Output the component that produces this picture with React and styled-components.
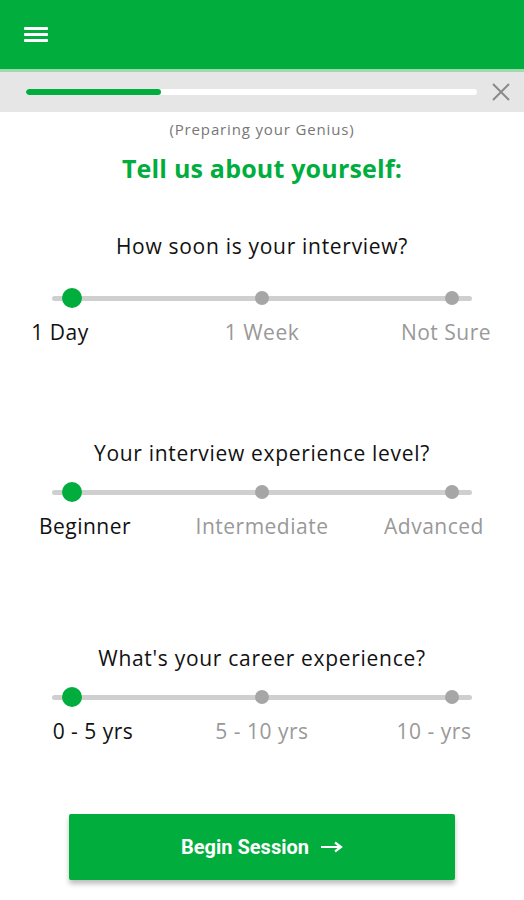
import React, { useState } from "react";
import styled, { createGlobalStyle } from "styled-components";

const GREEN = "#00ad3d";

const questions = [
  {
    id: "soon",
    title: "How soon is your interview?",
    top: 48,
    gap: 27,
    options: [
      { label: "1 Day", shift: -12 },
      { label: "1 Week", shift: 0 },
      { label: "Not Sure", shift: -6 },
    ],
  },
  {
    id: "level",
    title: "Your interview experience level?",
    top: 93,
    gap: 14,
    options: [
      { label: "Beginner", shift: 13 },
      { label: "Intermediate", shift: 0 },
      { label: "Advanced", shift: -18 },
    ],
  },
  {
    id: "career",
    title: "What's your career experience?",
    top: 104,
    gap: 14,
    options: [
      { label: "0 - 5 yrs", shift: 21 },
      { label: "5 - 10 yrs", shift: 0 },
      { label: "10 - yrs", shift: -18 },
    ],
  },
];

const App = () => {
  const [answers, setAnswers] = useState({ soon: 0, level: 0, career: 0 });

  return (
    <Page>
      <GlobalStyle />
      <Header>
        <MenuButton aria-label="menu">
          <span />
          <span />
          <span />
        </MenuButton>
      </Header>
      <ProgressStrip>
        <Track>
          <Fill style={{ width: "30%" }} />
        </Track>
        <Close aria-label="close">
          <svg width="20" height="20" viewBox="0 0 20 20">
            <path d="M2 2 L18 18 M18 2 L2 18" stroke="#8a8a8a" strokeWidth="2" fill="none" />
          </svg>
        </Close>
      </ProgressStrip>
      <Subtitle>(Preparing your Genius)</Subtitle>
      <Title>Tell us about yourself:</Title>
      {questions.map((q) => (
        <Question key={q.id} $top={q.top}>
          <QuestionTitle>{q.title}</QuestionTitle>
          <Slider $gap={q.gap}>
            <Line />
            {q.options.map((o, i) => (
              <DotCell key={o.label} onClick={() => setAnswers({ ...answers, [q.id]: i })}>
                <Dot $active={answers[q.id] === i} />
              </DotCell>
            ))}
          </Slider>
          <Labels>
            {q.options.map((o, i) => (
              <Label key={o.label} $active={answers[q.id] === i} $shift={o.shift}>
                {o.label}
              </Label>
            ))}
          </Labels>
        </Question>
      ))}
      <Footer>
        <BeginButton>
          Begin Session
          <svg width="22" height="12" viewBox="0 0 22 12">
            <path d="M0 6 H19 M14 1.5 L20 6 L14 10.5" stroke="#fff" strokeWidth="2.2" fill="none" />
          </svg>
        </BeginButton>
      </Footer>
    </Page>
  );
};

export default App;

const GlobalStyle = createGlobalStyle`
  body {
    margin: 0;
    background: #fff;
    font-family: "Open Sans", Lato, sans-serif;
  }
`;

const Page = styled.div`
  width: 524px;
  height: 900px;
  overflow: hidden;
  display: flex;
  flex-direction: column;
`;

const Header = styled.div`
  height: 69px;
  background: ${GREEN};
  border-bottom: 3px solid #9fd9b0;
  display: flex;
  align-items: center;
  padding-left: 24px;
`;

const MenuButton = styled.div`
  width: 24px;
  display: flex;
  flex-direction: column;
  gap: 3px;
  span {
    height: 3px;
    background: #fff;
    border-radius: 1px;
  }
`;

const ProgressStrip = styled.div`
  height: 40px;
  background: #e6e6e6;
  display: flex;
  align-items: center;
  padding: 0 13px 0 26px;
  gap: 14px;
`;

const Track = styled.div`
  flex: 1;
  height: 6px;
  background: #fff;
  border-radius: 3px;
  overflow: hidden;
`;

const Fill = styled.div`
  height: 100%;
  background: ${GREEN};
  border-radius: 3px;
`;

const Close = styled.div`
  width: 20px;
  height: 20px;
  display: flex;
`;

const Subtitle = styled.div`
  margin-top: 7px;
  line-height: 20px;
  text-align: center;
  font-size: 15px;
  letter-spacing: 0.85px;
  color: #777;
`;

const Title = styled.h1`
  margin: 13px 0 0;
  line-height: 32px;
  text-align: center;
  font-size: 25px;
  font-weight: 700;
  letter-spacing: 0.2px;
  color: ${GREEN};
`;

const Question = styled.div`
  margin-top: ${(p) => p.$top}px;
`;

const QuestionTitle = styled.div`
  line-height: 28px;
  text-align: center;
  font-size: 21px;
  letter-spacing: 0.7px;
  color: #111;
`;

const Slider = styled.div`
  position: relative;
  margin: ${(p) => p.$gap}px -23px 0;
  height: 22px;
  display: grid;
  grid-template-columns: repeat(3, 1fr);
  align-items: center;
`;

const Line = styled.div`
  position: absolute;
  left: 75px;
  right: 75px;
  top: 9px;
  height: 5px;
  background: #cfcfcf;
  border-radius: 3px;
`;

const DotCell = styled.div`
  position: relative;
  display: flex;
  justify-content: center;
  cursor: pointer;
`;

const Dot = styled.div`
  width: ${(p) => (p.$active ? 20 : 14)}px;
  height: ${(p) => (p.$active ? 20 : 14)}px;
  border-radius: 50%;
  background: ${(p) => (p.$active ? GREEN : "#a6a6a6")};
`;

const Labels = styled.div`
  margin: 9px -23px 0;
  line-height: 28px;
  display: grid;
  grid-template-columns: repeat(3, 1fr);
`;

const Label = styled.div`
  text-align: center;
  font-size: 21px;
  letter-spacing: 0.5px;
  color: ${(p) => (p.$active ? "#111" : "#999")};
  transform: translateX(${(p) => p.$shift}px);
`;

const Footer = styled.div`
  margin-top: auto;
  padding: 0 69px 20px;
`;

const BeginButton = styled.button`
  width: 100%;
  height: 66px;
  border: none;
  border-radius: 2px;
  background: ${GREEN};
  box-shadow: 0 4px 5px rgba(0, 0, 0, 0.25);
  color: #fff;
  font-family: Roboto, sans-serif;
  font-size: 20px;
  font-weight: 700;
  display: flex;
  align-items: center;
  justify-content: center;
  gap: 12px;
`;
